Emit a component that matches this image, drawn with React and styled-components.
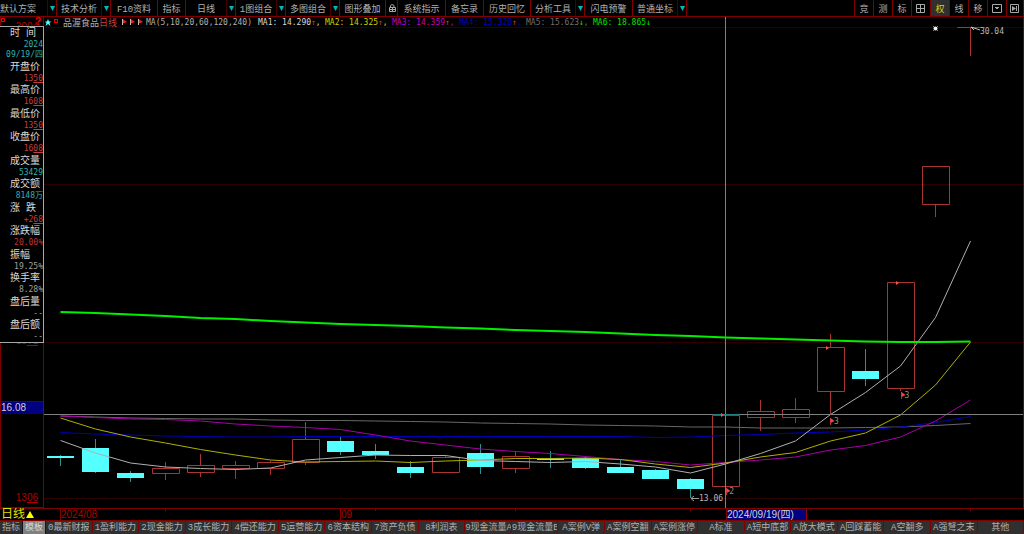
import React, { useState } from 'react';
import styled, { createGlobalStyle } from 'styled-components';

const GlobalStyle = createGlobalStyle`
  * {
    box-sizing: border-box;
  }

  body {
    margin: 0;
    background: #000;
    color: #b0b0b0;
    font-family: "DejaVu Sans Mono", "Noto Sans CJK SC", monospace;
    font-size: 8px;
  }

  button {
    margin: 0;
    padding: 0;
    border: 0;
    background: none;
    color: inherit;
    font: inherit;
    cursor: pointer;
  }
`;

const Page = styled.div`
  display: flex;
  flex-direction: column;
  height: 100vh;
  overflow: hidden;
  white-space: nowrap;
`;

const Toolbar = styled.header`
  display: flex;
  height: 17px;
  border-bottom: 1px solid #800000;
  font-family: "Liberation Mono", "Noto Sans CJK SC", monospace;
  font-size: 9px;
`;

const ToolButton = styled.button`
  display: flex;
  align-items: center;
  justify-content: ${props => props.$start ? 'flex-start' : 'center'};
  flex: none;
  width: ${props => props.$width}px;
  border-right: 1px solid ${props => props.$soft ? '#4a0000' : '#800000'};
  background: ${props => props.$active ? '#303030' : 'transparent'};
  color: ${props => props.$active ? '#d8d800' : 'inherit'};
`;

const Spacer = styled.div`
  flex: 1;
  border-right: 1px solid #800000;
`;

const Main = styled.main`
  display: flex;
  flex: 1;
  min-height: 0;
`;

const PriceAxis = styled.div`
  position: relative;
  display: flex;
  flex-direction: column;
  justify-content: space-between;
  flex: none;
  width: 44px;
  padding: 4px 5px 3px 0;
  border: solid #800000;
  border-width: 0 1px 1px 1px;
  color: #b00000;
  font: 10px/12px "Liberation Sans", sans-serif;
  text-align: right;
`;

const AxisLabel = styled.div`
  height: 12px;
`;

const Cents = styled.span`
  text-decoration: underline;
`;

const AxisMark = styled.div`
  position: absolute;
  top: 0;
  left: 0;
  right: 2px;
  display: flex;
  justify-content: space-between;
  color: #ff0000;
  font-weight: bold;
  line-height: 9px;
`;

const PriceTag = styled.div`
  position: absolute;
  top: 78.4%;
  left: 0;
  right: 0;
  border-top: 1px solid #600000;
  background: #000080;
  color: #d0d0d0;
  text-align: left;
`;

const InfoPanel = styled.dl`
  position: absolute;
  top: 9px;
  left: -1px;
  display: flex;
  flex-direction: column;
  justify-content: space-between;
  width: 44px;
  height: 317px;
  margin: 0;
  padding-top: 1px;
  border: solid #a8a8a8;
  border-width: 1px 1px 1px 0;
  background: #000;
  text-align: left;
`;

const InfoTitle = styled.dt`
  padding-left: 10px;
  color: #d8d8d8;
  font: 10px/12px "Liberation Mono", "Noto Sans CJK SC", monospace;
`;

const InfoValue = styled.dd`
  margin: 0;
  color: ${props => props.$color};
  font: 8px/10px "DejaVu Sans Mono", "Noto Sans CJK SC", monospace;
  text-align: right;
`;

const ChartColumn = styled.section`
  display: flex;
  flex-direction: column;
  flex: 1;
  min-width: 0;
  border-right: 1px solid #800000;
`;

const Legend = styled.div`
  display: flex;
  align-items: center;
  gap: 2px;
  height: 10px;
  padding-left: 1px;
`;

const StockName = styled.span`
  padding-left: 3px;
  font-size: 9px;
`;

const Period = styled.span`
  color: #c04040;
`;

const Flags = styled.span`
  display: flex;
  gap: 2px;
  padding: 0 1px 0 2px;
`;

const MaParams = styled.span`
  width: 110px;
`;

const MaItem = styled.span`
  width: 65px;
  color: ${props => props.$color};
`;

const Arrow = styled.span`
  color: ${props => props.$up ? '#c04040' : '#00f000'};
`;

const Plot = styled.div`
  position: relative;
  flex: 1;
  min-height: 0;

  svg {
    display: block;
    width: 100%;
    height: 100%;
    overflow: visible;
  }
`;

const PlotLabel = styled.span`
  position: absolute;
  color: ${props => props.$color || '#909090'};
  line-height: 10px;
`;

const TimeAxis = styled.div`
  display: grid;
  grid-template-columns: 60fr 280fr 386fr 298fr;
  height: 12px;
  border-top: 1px solid #800000;
  color: #b00000;
  font: 10px/11px "Liberation Sans", "Noto Sans CJK SC", sans-serif;
`;

const PeriodButton = styled.button`
  display: flex;
  align-items: center;
  gap: 1px;
  padding-left: 1px;
  color: #e0e000;
  font-size: 12px;
  line-height: 11px;
`;

const TimeCell = styled.div`
  border-left: 1px solid #800000;
`;

const DateTag = styled.div`
  width: 80px;
  border-right: 1px solid #a00000;
  background: #000080;
  color: #d0d0d0;
`;

const Tabs = styled.nav`
  display: flex;
  height: 14px;
  border-top: 1px solid #800000;
  background: #303030;
  font-family: "Liberation Mono", "Noto Sans CJK SC", monospace;
  font-size: 9px;
`;

const Tab = styled.button`
  flex: ${props => props.$small ? '0 0 23px' : '1 1 0'};
  min-width: 0;
  overflow: hidden;
  border-right: 1px solid ${props => props.$small ? '#181818' : '#800000'};
  border-bottom-right-radius: ${props => props.$small ? '0' : '4px'};
  background: ${props => props.$active ? '#808080' : '#303030'};
  color: ${props => props.$active ? '#d8d8d8' : '#b0b0b0'};
  line-height: 12px;
`;

const tools = [
  { label: '默认方案', width: 48, menu: true, start: true },
  { label: '技术分析', width: 45, menu: true },
  { label: 'F10资料', width: 47 },
  { label: '指标', width: 28 },
  { label: '日线', width: 41, menu: true },
  { label: '1图组合', width: 41, menu: true },
  { label: '多图组合', width: 45, menu: true },
  { label: '图形叠加', width: 46 },
  { icon: 'lock', name: '锁定', width: 12 },
  { label: '系统指示', width: 48 },
  { label: '备忘录', width: 38 },
  { label: '历史回忆', width: 47 },
  { label: '分析工具', width: 45, menu: true },
  { label: '闪电预警', width: 48 },
  { label: '普通坐标', width: 45, menu: true },
];

const sideTools = [
  { label: '竞', width: 19 },
  { label: '测', width: 19 },
  { label: '标', width: 19 },
  { icon: 'grid', name: '网格', width: 19 },
  { label: '权', width: 19, active: true },
  { label: '线', width: 19 },
  { label: '移', width: 19 },
  { icon: 'window', name: '窗口', width: 19 },
  { icon: 'next', name: '下一个', width: 17 },
];

const info = [
  ['时 间', ['2024', '09/19/四'], 'cyan'],
  ['开盘价', ['1350'], 'price'],
  ['最高价', ['1608'], 'price'],
  ['最低价', ['1350'], 'price'],
  ['收盘价', ['1608'], 'price'],
  ['成交量', ['53429'], 'cyan'],
  ['成交额', ['8148万'], 'cyan'],
  ['涨 跌', ['+268'], 'price'],
  ['涨跌幅', ['20.00%'], 'red'],
  ['振幅', ['19.25%'], 'gray'],
  ['换手率', ['8.28%'], 'gray'],
  ['盘后量', ['--'], 'gray'],
  ['盘后额', ['--'], 'gray'],
];

const infoColors = {
  cyan: '#30b0b0',
  price: '#c04040',
  red: '#c03030',
  gray: '#a0a0a0',
};

const averages = [
  ['MA1: 14.290', '#d8d8d8', true],
  ['MA2: 14.325', '#d0d000', true],
  ['MA3: 14.359', '#c000c0', true],
  ['MA4: 15.320', '#0000c0', true],
  ['MA5: 15.623', '#707070', false],
  ['MA6: 18.865', '#00e000', false],
];

const tabs = [
  '0最新财报', '1盈利能力', '2现金能力', '3成长能力', '4偿还能力', '5运营能力',
  '6资本结构', '7资产负债', '8利润表', '9现金流量A', '9现金流量B', 'A案例V弹',
  'A案例空翻', 'A案例涨停', 'A标准', 'A短中底部', 'A放大模式', 'A回踩蓄能',
  'A空翻多', 'A强弩之末', '其他',
];

// x of the first candle and the distance between two candles
const START = 60.5;
const STEP = 35;

// high, body top, body bottom, low, rising
const candles = [
  [455, 456, 458, 466, 0],
  [439, 448, 472, 473, 0],
  [471, 473, 478, 482, 0],
  [462, 468, 473, 480, 1],
  [454, 465, 472, 477, 1],
  [461, 465, 468, 479, 1],
  [461, 462, 468, 475, 1],
  [422, 439, 462, 465, 1],
  [437, 441, 452, 455, 0],
  [444, 451, 455, 459, 0],
  [461, 467, 473, 478, 0],
  [455, 457, 472, 472, 1],
  [444, 453, 467, 474, 0],
  [451, 456, 468, 473, 1],
  [451, 458, 460, 468, 0],
  [457, 458, 468, 469, 0],
  [460, 467, 473, 473, 0],
  [469, 470, 479, 479, 0],
  [478, 479, 489, 498, 0],
  [415, 415, 486, 486, 1],
  [400, 411, 417, 431, 1],
  [398, 409, 417, 423, 1],
  [334, 347, 391, 414, 1],
  [349, 371, 379, 386, 0],
  [282, 282, 388, 391, 1],
  [166, 166, 204, 217, 1],
  [27, 27, 27, 56, 1],
];

const lines = [
  { color: '#686868', ys: [416, 417, 418, 418.5, 419, 419, 420, 420.5, 420.5, 421, 421.5, 422, 423, 423.5, 424, 425, 425.5, 426, 427, 427, 428, 428, 428, 427.5, 427, 425.5, 423.5] },
  { color: '#0000b8', ys: [432.5, 434, 435, 436, 436.5, 437, 437, 436.5, 436.5, 436.5, 436.5, 436.5, 436.5, 436.5, 436.5, 436.5, 436.5, 437.5, 437, 435.5, 434.5, 433, 432, 430, 427, 422.5, 416.5] },
  { color: '#a800a8', ys: [416, 417.5, 419, 419.5, 421, 424, 426, 427.5, 429.5, 435, 441, 445, 449, 451.5, 453.5, 456.5, 459.5, 461.5, 465, 462.5, 460, 457, 450, 445.5, 437, 421, 400] },
  { color: '#b0b000', ys: [418, 429, 437, 443, 449.5, 455, 460, 462, 461.5, 461, 462.5, 461, 460, 458.5, 458.5, 458, 459.5, 464, 467.5, 463, 457, 452.5, 441, 433, 415, 385, 342] },
  { color: '#b0b0b0', ys: [440.5, 453, 463, 467, 468.5, 469.5, 468, 460, 457.5, 455, 455.5, 455.5, 460.5, 461.5, 462.5, 461.5, 464, 467, 473, 464, 453.5, 441, 414.5, 392.5, 366, 317.5, 241] },
  { color: '#00f000', width: 2, ys: [312, 313, 314.5, 316, 318, 319, 321, 322.5, 324, 325, 326, 327.5, 328.5, 330, 331, 332, 333.5, 335, 336, 337.5, 338.5, 339.5, 340.5, 341.5, 342, 342, 341.5] },
];

const Icon = ({ type }) => {
  if (type === 'flag') {
    return (
      <svg width="6" height="8" viewBox="0 0 6 8">
        <path d="M1 0.5L6 4L1 6Z" fill="#f02020" />
        <path d="M1.5 1V7" stroke="#d0b0b0" />
      </svg>
    );
  }
  if (type === 'down') {
    return (
      <svg width="5" height="5" viewBox="0 0 5 5">
        <path d="M0 0H5L2.5 5Z" fill="#00b8b8" />
      </svg>
    );
  }
  if (type === 'square') {
    return (
      <svg width="5" height="5" viewBox="0 0 5 5">
        <path d="M0.5 1.5H3.5V4.5H0.5Z" fill="none" stroke="#ff0000" />
      </svg>
    );
  }
  return (
    <svg width="10" height="10" viewBox="0 0 10 10" fill="none" stroke="#a8a8a8">
      {type === 'lock' && <path d="M3.5 4.5V2.5L5 1.5L7 2.5V4M2.5 4.5H8.5V8.5H2.5ZM3 6.5H8M5.5 5V8" />}
      {type === 'grid' && <path d="M0.5 1.5H8.5V9.5H0.5ZM0.5 5.5H8.5M4.5 1.5V9.5" />}
      {type === 'window' && <path d="M0.5 1.5H9.5V9.5H0.5ZM3 4.5H7M4 5.5H6" />}
      {type === 'next' && (
        <>
          <path d="M0.5 1.5H8.5V9.5H0.5ZM6.5 3V8" />
          <path d="M2 3L6 5.5L2 8Z" fill="#a8a8a8" stroke="none" />
        </>
      )}
    </svg>
  );
};

const Tool = ({ label, icon, name, width, menu, start, active }) => (
  <>
    <ToolButton $width={width} $start={start} $soft={menu} $active={active} aria-label={name}>
      {icon ? <Icon type={icon} /> : label}
    </ToolButton>
    {menu && (
      <ToolButton $width={9} aria-label={`${label} 菜单`}>
        <Icon type="down" />
      </ToolButton>
    )}
  </>
);

const Price = ({ value }) => (
  <>{value.slice(0, -2)}<Cents>{value.slice(-2)}</Cents></>
);

const Candle = ({ index, data }) => {
  const [high, top, bottom, low, rising] = data;
  const x = START + index * STEP;

  if (rising) {
    return (
      <g fill="none" stroke="#a83434">
        <path d={`M${x} ${high}V${top}M${x} ${bottom}V${low}`} />
        <path d={`M${x - 13} ${top + 0.5}h27v${bottom - top}h-27z`} />
      </g>
    );
  }
  return (
    <g>
      <path d={`M${x} ${high}V${low}`} stroke="#2a9090" />
      <rect x={x - 13.5} y={top} width="27" height={bottom - top} fill="#54ffff" />
    </g>
  );
};

const Flag = ({ x, y }) => (
  <g>
    <path d={`M${x} ${y}V${y + 7}`} stroke="#a83434" />
    <path d={`M${x} ${y}L${x + 4} ${y + 3}L${x} ${y + 5}Z`} fill="#ff4040" />
  </g>
);

const Chart = () => (
  <svg viewBox="44 27 979 481" preserveAspectRatio="none">
    <path d="M44 27.5H1023M44 184.5H1023M44 342.5H1023M44 498.5H1023" stroke="#2c0000" />
    <path d="M95.5 508V511M165.5 508V511M375.5 508V511M515.5 508V511M690.5 508V511M970.5 508V511" stroke="#800000" />

    {candles.map((data, i) => <Candle key={i} index={i} data={data} />)}

    {lines.map(({ color, width, ys }) => (
      <polyline
        key={color}
        points={ys.map((y, i) => `${START + i * STEP},${y}`).join(' ')}
        fill="none"
        stroke={color}
        strokeWidth={width || 1}
      />
    ))}

    {/* crosshair */}
    <path d="M44 414.5H1023M725.5 17V508" stroke="#808080" />
    <path d="M713 414.5H739" stroke="#208080" />

    {/* signal marks */}
    <Flag x={726.5} y={488} />
    <Flag x={830.5} y={418} />
    <Flag x={901.5} y={392} />
    <path d="M721 413L724 415L721 417ZM826 346L829 348L826 350ZM896 281L899 283L896 285Z" fill="#ff5050" />

    {/* lowest and highest price */}
    <path d="M691 498.5H699M694 496L691 498.5L694 501" fill="none" stroke="#a0a0a0" />
    <path d="M971 27L980 30M971 27L974 30" fill="none" stroke="#c0c0c0" />
    <path d="M933 26L938 31M938 26L933 31" stroke="#808080" />
    <circle cx="935.5" cy="28.5" r="2" fill="#f0f0f0" />
  </svg>
);

const App = () => {
  const [tab, setTab] = useState('模板');

  return (
    <Page>
      <GlobalStyle />

      <Toolbar>
        {tools.map(tool => <Tool key={tool.label || tool.name} {...tool} />)}
        <Spacer />
        {sideTools.map(tool => <Tool key={tool.label || tool.name} {...tool} />)}
      </Toolbar>

      <Main>
        <PriceAxis>
          <AxisLabel><Price value="3004" /></AxisLabel>
          <AxisLabel />
          <AxisLabel><Price value="1871" /></AxisLabel>
          <AxisLabel><Price value="1306" /></AxisLabel>
          <PriceTag>16.08</PriceTag>
          <AxisMark><Icon type="square" />?</AxisMark>
          <InfoPanel>
            {info.map(([title, values, kind]) => (
              <div key={title}>
                <InfoTitle>{title}</InfoTitle>
                {values.map(value => (
                  <InfoValue key={value} $color={infoColors[kind]}>
                    {kind === 'price' ? <Price value={value} /> : value}
                  </InfoValue>
                ))}
              </div>
            ))}
          </InfoPanel>
        </PriceAxis>

        <ChartColumn>
          <Legend>
            <svg width="13" height="9" viewBox="0 0 13 9">
              <path d="M3 1L4 3.5H6.5L4.5 5L5.5 8L3 6L0.5 8L1.5 5L0 3.5H2Z" fill="#54ffff" />
              <rect x="9.5" y="1.5" width="3" height="3" fill="none" stroke="#e00000" />
            </svg>
            <StockName>品渥食品<Period>日线</Period></StockName>
            <Flags>
              <Icon type="flag" />
              <Icon type="flag" />
              <Icon type="flag" />
            </Flags>
            <MaParams>MA(5,10,20,60,120,240)</MaParams>
            {averages.map(([text, color, up], i) => (
              <MaItem key={text} $color={color}>
                {text}<Arrow $up={up}>{up ? '↑' : '↓'}</Arrow>{i < 5 && ','}
              </MaItem>
            ))}
          </Legend>
          <Plot>
            <Chart />
            <PlotLabel style={{ left: '95.6%', top: '0%' }} $color="#b8b8b8">30.04</PlotLabel>
            <PlotLabel style={{ left: '66.9%', top: '97%' }} $color="#b8b8b8">13.06</PlotLabel>
            <PlotLabel style={{ left: '70%', top: '95.6%' }}>2</PlotLabel>
            <PlotLabel style={{ left: '80.7%', top: '81%' }}>3</PlotLabel>
            <PlotLabel style={{ left: '87.9%', top: '75.7%' }}>3</PlotLabel>
          </Plot>
        </ChartColumn>
      </Main>

      <TimeAxis>
        <PeriodButton>
          日线
          <svg width="8" height="7" viewBox="0 0 8 7">
            <path d="M4 0L8 7H0Z" fill="#ffff00" />
          </svg>
        </PeriodButton>
        <TimeCell>2024/08</TimeCell>
        <TimeCell>09</TimeCell>
        <TimeCell><DateTag>2024/09/19(四)</DateTag></TimeCell>
      </TimeAxis>

      <Tabs>
        {['指标', '模板'].map(name => (
          <Tab key={name} $small $active={tab === name} onClick={() => setTab(name)}>{name}</Tab>
        ))}
        {tabs.map(name => (
          <Tab key={name} $active={tab === name} onClick={() => setTab(name)}>{name}</Tab>
        ))}
      </Tabs>
    </Page>
  );
};

export default App;
